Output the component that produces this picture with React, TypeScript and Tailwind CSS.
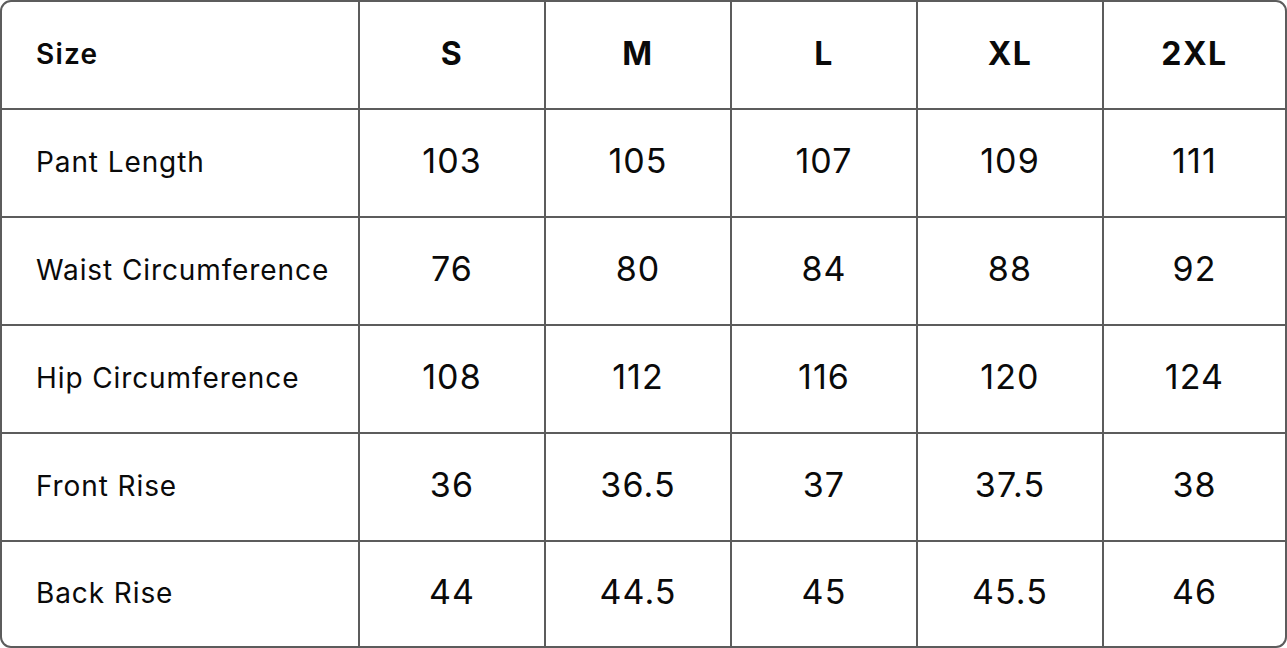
const sizes = ['S', 'M', 'L', 'XL', '2XL']

const rows: Array<{ label: string; values: string[] }> = [
  { label: 'Pant Length', values: ['103', '105', '107', '109', '111'] },
  { label: 'Waist Circumference', values: ['76', '80', '84', '88', '92'] },
  { label: 'Hip Circumference', values: ['108', '112', '116', '120', '124'] },
  { label: 'Front Rise', values: ['36', '36.5', '37', '37.5', '38'] },
  { label: 'Back Rise', values: ['44', '44.5', '45', '45.5', '46'] },
]

export default function App() {
  return (
    <div className="w-[1287px] h-[648px] bg-white font-['Inter',sans-serif] text-[#0a0a0a]">
      <div className="grid h-full grid-cols-[358px_186px_186px_186px_186px_1fr] grid-rows-[108px_108px_108px_108px_108px_1fr] overflow-hidden rounded-[11px] border-2 border-[#5c5c5c]">
        {/* Header */}
        <div className="flex items-center border-r-2 border-b-2 border-[#5c5c5c] pl-[34px] pb-[2px] text-[28px] font-semibold tracking-[1.2px]">
          Size
        </div>
        {sizes.map((s, i) => (
          <div
            key={s}
            className={`flex items-center justify-center border-b-2 border-[#5c5c5c] pb-[3px] text-[32px] font-bold tracking-[1.5px] ${
              i < sizes.length - 1 ? 'border-r-2' : ''
            }`}
          >
            {s}
          </div>
        ))}

        {/* Body */}
        {rows.map((row, r) => {
          const last = r === rows.length - 1
          return [
            <div
              key={row.label}
              className={`flex items-center border-r-2 border-[#5c5c5c] pl-[34px] pb-[2px] text-[28px] tracking-[0.9px] ${
                last ? '' : 'border-b-2'
              }`}
            >
              {row.label}
            </div>,
            ...row.values.map((v, i) => (
              <div
                key={row.label + i}
                className={`flex items-center justify-center border-[#5c5c5c] pb-[6px] text-[34px] tracking-[1.1px] ${
                  last ? '' : 'border-b-2'
                } ${i < row.values.length - 1 ? 'border-r-2' : ''}`}
              >
                {v}
              </div>
            )),
          ]
        })}
      </div>
    </div>
  )
}
